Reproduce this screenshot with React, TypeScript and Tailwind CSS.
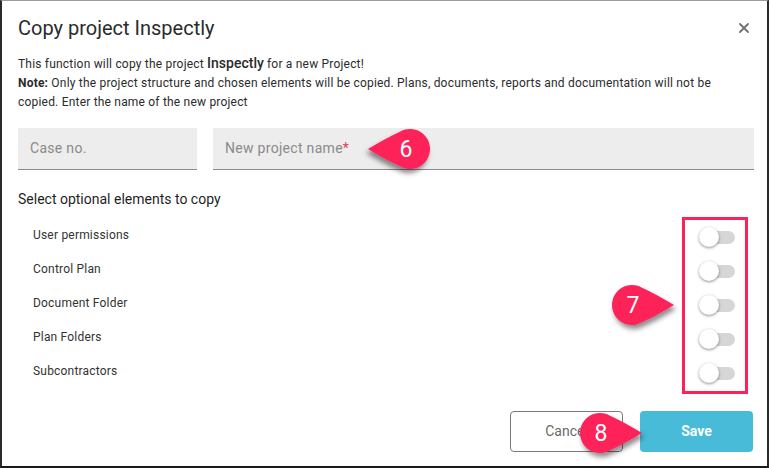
import React from "react";

const PINK = "#fd2159";

function Drop({ dir, n, className }: { dir: "left" | "right"; n: string; className: string }) {
  const path = "M62 20 Q44 9 29.5 2.4 A20 20 0 1 0 29.5 37.6 Q44 31 62 20 Z";
  return (
    <div className={"absolute w-[66px] h-[48px] " + className}>
      <svg width="66" height="48" viewBox="0 0 66 48" className="absolute left-0 top-0 overflow-visible">
        <defs>
          <filter id={"sh" + n} x="-30%" y="-30%" width="160%" height="170%">
            <feDropShadow dx="2" dy="4" stdDeviation="2.5" floodColor="#000" floodOpacity="0.45" />
          </filter>
        </defs>
        <g transform={dir === "left" ? "translate(64,0) scale(-1,1)" : "translate(1,0)"} filter={"url(#sh" + n + ")"}>
          <path d={path} fill={PINK} />
        </g>
      </svg>
      <div
        className={
          "absolute top-0 h-[40px] w-[40px] flex items-center justify-center text-white text-[23px] leading-none " +
          (dir === "left" ? "left-[20px]" : "left-[2px]")
        }
        style={{ fontFamily: "Roboto, 'Liberation Sans', sans-serif" }}
      >
        {n}
      </div>
    </div>
  );
}

function Toggle() {
  return (
    <div className="relative w-[36px] h-[20px] mt-[3px]">
      <div className="absolute left-[2px] top-[4px] w-[34px] h-[13px] rounded-full bg-[#d6d6d6]" />
      <div className="absolute left-0 top-0 w-[20px] h-[20px] rounded-full bg-white shadow-[0_1px_3px_rgba(0,0,0,0.45)]" />
    </div>
  );
}

export default function App() {
  const items = ["User permissions", "Control Plan", "Document Folder", "Plan Folders", "Subcontractors"];
  return (
    <div
      className="relative w-[771px] h-[468px] bg-white overflow-hidden"
      style={{ fontFamily: "Roboto, 'Liberation Sans', sans-serif" }}
    >
      <div className="w-[769px] h-[468px] border-l-2 border-r-2 border-b-2 border-t border-l-[#2a2a2a] border-r-[#2a2a2a] border-b-[#1a1a1a] border-t-[#9a9a9a] flex flex-col pl-[16px] pr-[13px]">
        <div className="flex items-center justify-between pt-[13px]">
          <div className="text-[20px] leading-[28px] text-[#2b2b2b]">Copy project Inspectly</div>
          <svg width="12" height="12" viewBox="0 0 12 12" className="mr-[4px]">
            <path d="M2 2 L10 10 M10 2 L2 10" stroke="#6f6f6f" strokeWidth="1.8" strokeLinecap="round" />
          </svg>
        </div>
        <div className="mt-[12px] text-[12px] leading-[19px] tracking-[0.2px] text-[#2b2b2b]">
          <div>
            This function will copy the project <span className="text-[14px] font-medium tracking-normal">Inspectly</span> for a new Project!
          </div>
          <div>
            <span className="font-bold">Note:</span> Only the project structure and chosen elements will be copied. Plans,
            documents, reports and documentation will not be
          </div>
          <div>copied. Enter the name of the new project</div>
        </div>
        <div className="mt-[16px] flex gap-[16px]">
          <div className="w-[179px] h-[42px] bg-[#ededed] border-b border-b-[#8a8a8a] flex items-center pl-[12px] text-[14px] tracking-[0.3px] text-[#8a8a8a]">
            Case no.
          </div>
          <div className="flex-1 h-[42px] bg-[#ededed] border-b border-b-[#8a8a8a] flex items-center pl-[12px] text-[14px] tracking-[0.3px] text-[#8a8a8a]">
            New project name<span className="text-[#e53950]">*</span>
          </div>
        </div>
        <div className="mt-[19px] text-[14px] leading-[20px] text-[#1f1f1f]">Select optional elements to copy</div>
        <div className="mt-[9px] flex flex-col">
          {items.map((t) => (
            <div key={t} className="h-[34px] flex items-center justify-between pl-[15px] pr-[19px]">
              <span className="text-[12px] tracking-[0.2px] text-[#333]">{t}</span>
              <Toggle />
            </div>
          ))}
        </div>
        <div className="mt-[23px] flex justify-end gap-[17px] pr-[1px]">
          <div className="w-[113px] h-[41px] rounded-[4px] border border-[#7a7a7a] flex items-center justify-center text-[14px] text-[#6a6a6a]">
            Cancel
          </div>
          <div className="w-[113px] h-[41px] rounded-[4px] bg-[#47bbd7] flex items-center justify-center text-[14px] font-bold text-white">
            Save
          </div>
        </div>
      </div>

      <div className="absolute left-[682px] top-[217px] w-[66px] h-[177px] border-[3px] border-[#fd2159]" />
      <Drop dir="left" n="6" className="left-[366px] top-[129px]" />
      <Drop dir="right" n="7" className="left-[611px] top-[285px]" />
      <Drop dir="right" n="8" className="left-[579px] top-[413px]" />
    </div>
  );
}
